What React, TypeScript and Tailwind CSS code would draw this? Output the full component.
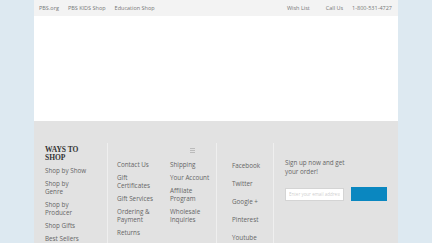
const shopLinks = [['Shop by Show'], ['Shop by', 'Genre'], ['Shop by', 'Producer'], ['Shop Gifts'], ['Best Sellers']];
const helpLinks = [['Contact Us'], ['Gift', 'Certificates'], ['Gift Services'], ['Ordering &', 'Payment'], ['Returns']];
const accountLinks = [['Shipping'], ['Your Account'], ['Affiliate', 'Program'], ['Wholesale', 'Inquiries']];
const socialLinks = ['Facebook', 'Twitter', 'Google +', 'Pinterest', 'Youtube'];

function LinkList({ items }: { items: string[][] }) {
  return (
    <div className="flex flex-col gap-[5px]">
      {items.map((lines) => (
        <a key={lines.join(' ')} className="block leading-[8px]">
          {lines.map((l) => (
            <div key={l}>{l}</div>
          ))}
        </a>
      ))}
    </div>
  );
}

export default function App() {
  return (
    <div className="min-h-[243px] h-[243px] overflow-hidden bg-[#dde9f1] font-['Open_Sans',sans-serif]">
      <div className="mx-auto flex h-full w-[364px] flex-col bg-white">
        <header className="flex h-4 items-center justify-between bg-[#f3f3f3] pl-[5px] pr-[6px] pt-[1px] text-[5.5px] text-[#777]">
          <nav className="flex gap-[9px]">
            <a>PBS.org</a>
            <a>PBS KIDS Shop</a>
            <a>Education Shop</a>
          </nav>
          <nav className="flex items-center">
            <a className="mr-[16px]">Wish List</a>
            <a className="mr-[9px]">Call Us</a>
            <a>1-800-531-4727</a>
          </nav>
        </header>

        <main className="h-[105px]" />

        <footer className="flex flex-1 bg-[#e2e2e2] pt-[22px] pl-[11px] text-[6.3px] text-[#666]">
          <div className="w-[62px] pt-[3px]">
            <h3 className="font-['Liberation_Serif',serif] text-[7.5px] font-bold leading-[8px] text-[#333]">
              WAYS TO
              <br />
              SHOP
            </h3>
            <div className="mt-[5px]">
              <LinkList items={shopLinks} />
            </div>
          </div>

          <div className="w-[109px] border-l border-[#efefef] pl-[9px]">
            <div className="flex h-[15px] items-end justify-end pr-[21px]">
              <svg width="5" height="5" viewBox="0 0 5 5" className="mb-[5px]">
                <rect y="0" width="5" height="1" fill="#bbb" />
                <rect y="2" width="5" height="1" fill="#bbb" />
                <rect y="4" width="5" height="1" fill="#bbb" />
              </svg>
            </div>
            <div className="mt-[3px] flex">
              <div className="w-[53px]">
                <LinkList items={helpLinks} />
              </div>
              <LinkList items={accountLinks} />
            </div>
          </div>

          <div className="w-[57px] border-l border-[#efefef] pl-[15px] pt-[19px]">
            <div className="flex flex-col gap-[10px]">
              {socialLinks.map((s) => (
                <a key={s} className="block leading-[8px]">
                  {s}
                </a>
              ))}
            </div>
          </div>

          <div className="flex-1 border-l border-[#efefef] pl-[11px] pt-[15px]">
            <p className="w-[66px] leading-[9px]">Sign up now and get your order!</p>
            <form className="mt-[11px] flex items-center">
              <input
                className="h-[13px] w-[59px] border border-[#d4d4d4] bg-white px-[3px] text-[4.5px] text-[#999] outline-none"
                placeholder="Enter your email address"
              />
              <button type="button" className="ml-[7px] h-[14px] w-[36px] bg-[#0a87c0]" />
            </form>
          </div>
        </footer>
      </div>
    </div>
  );
}
